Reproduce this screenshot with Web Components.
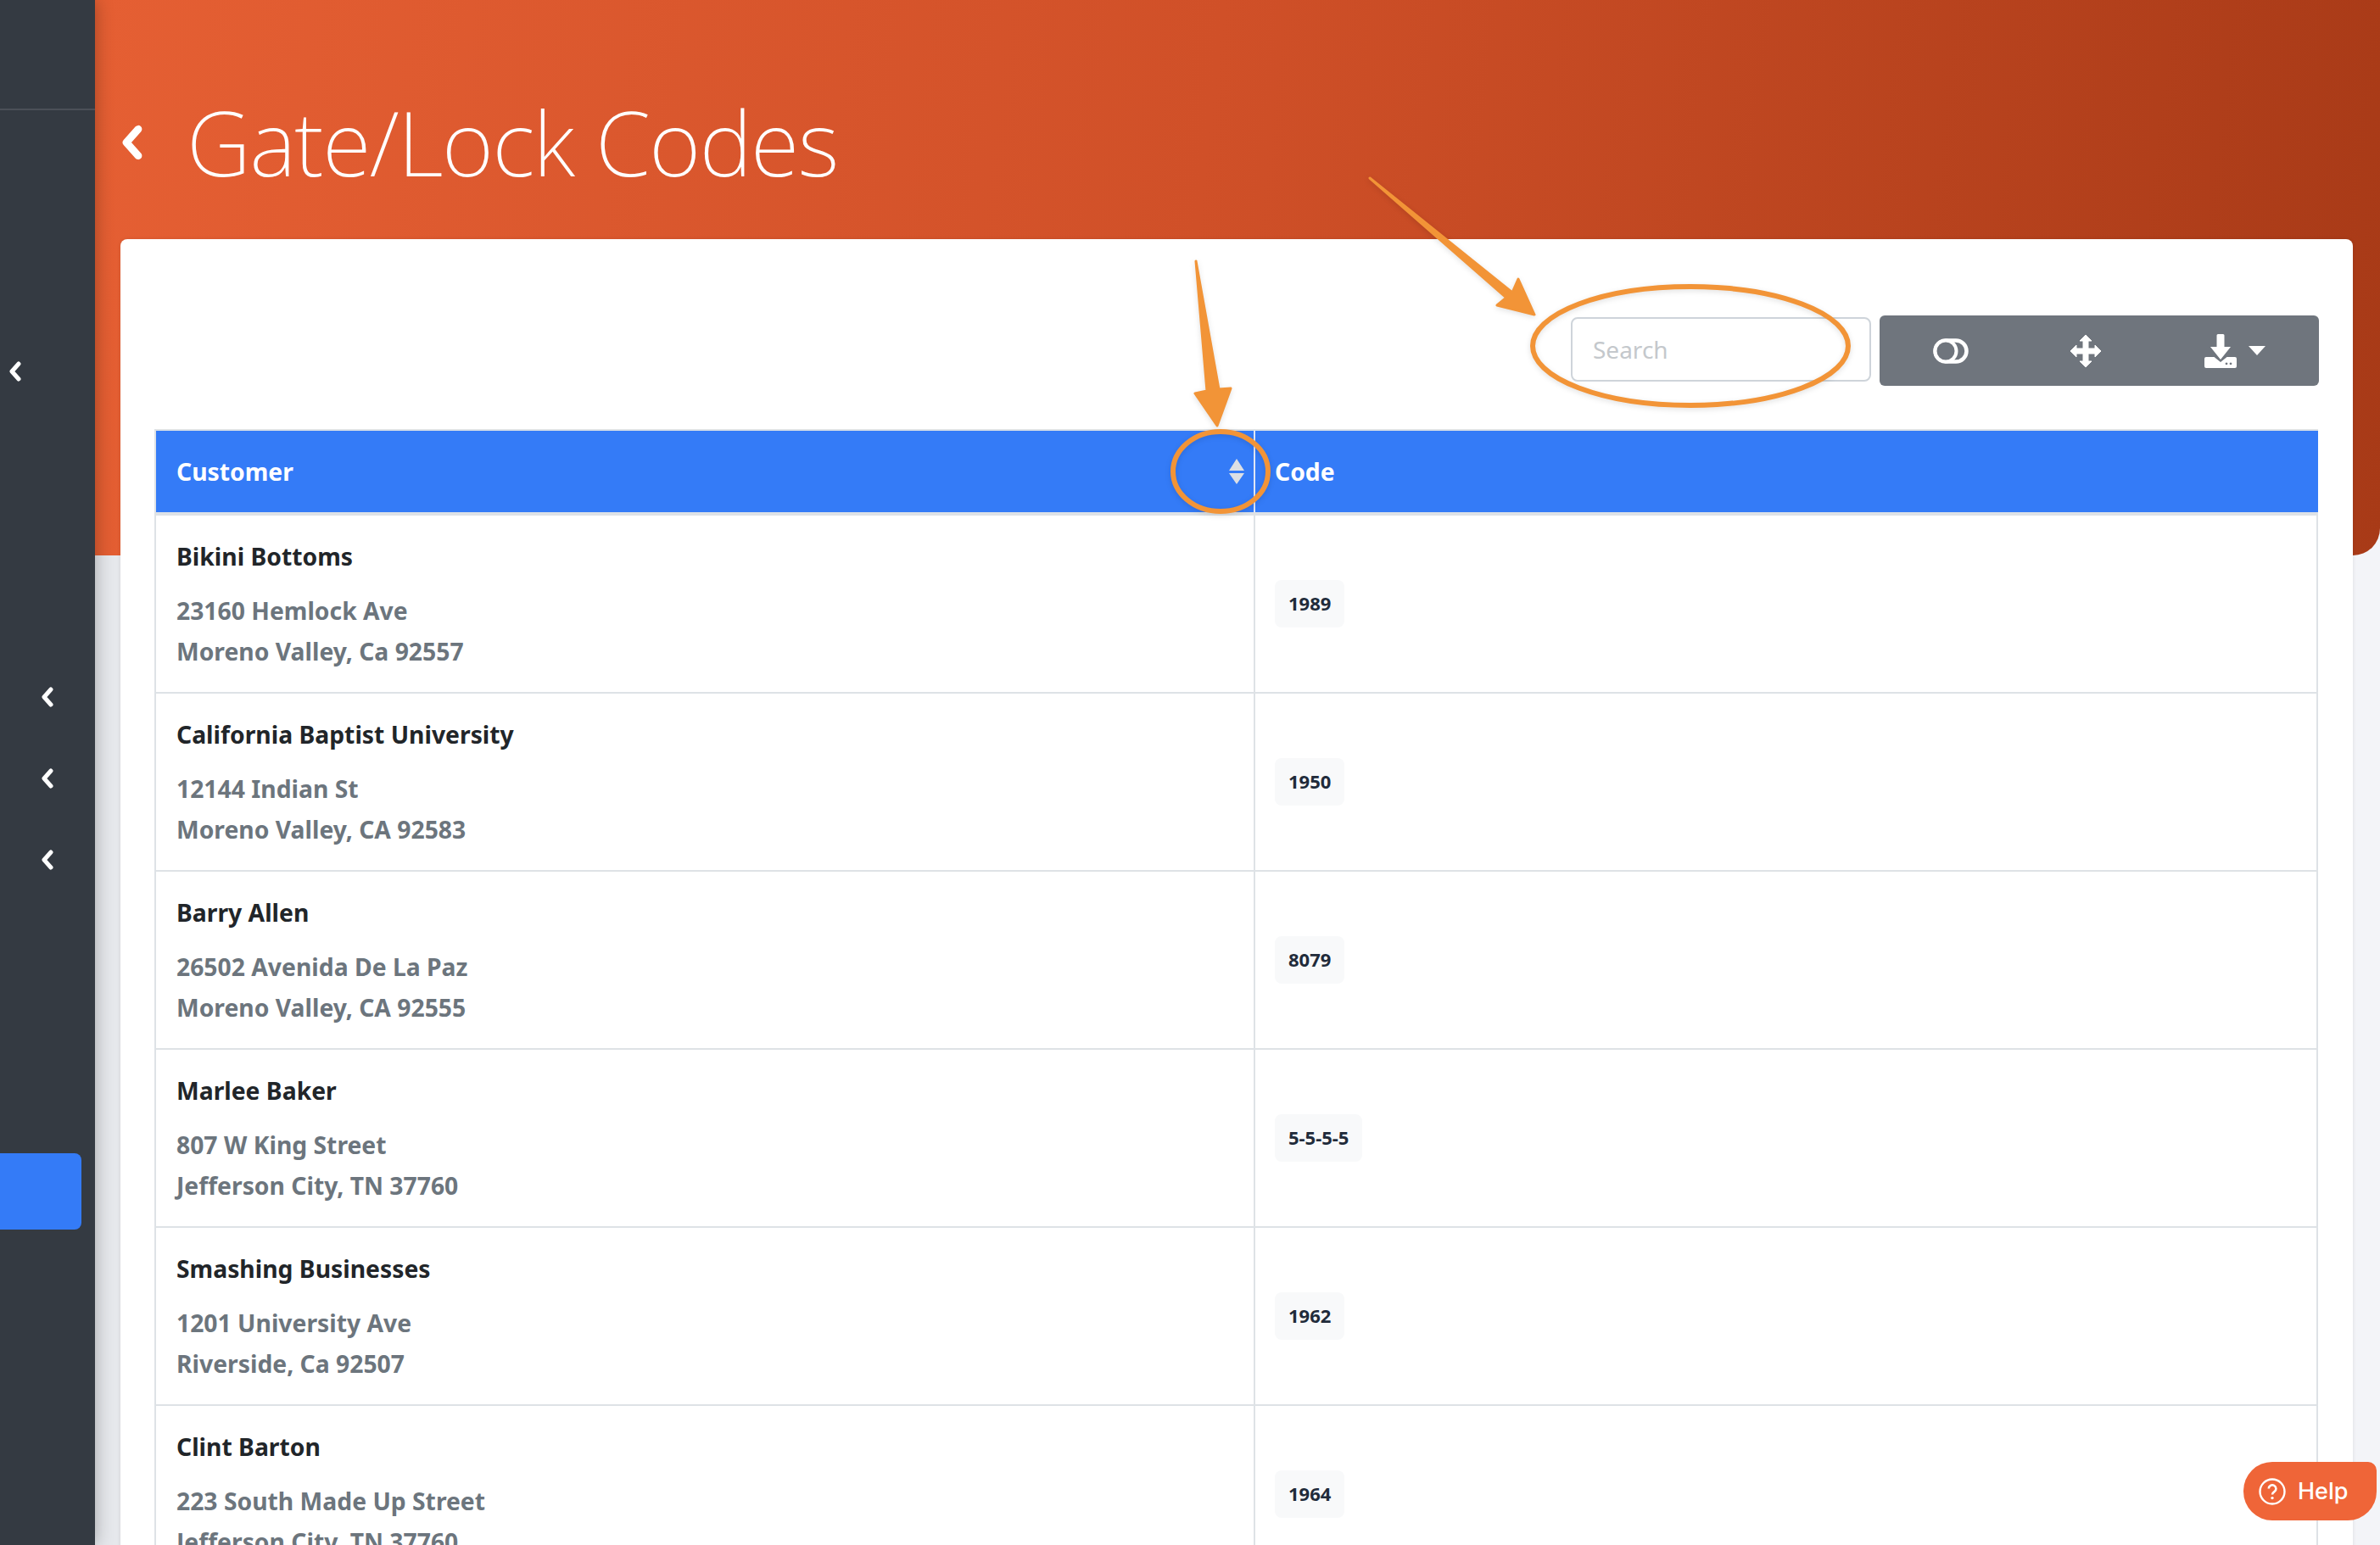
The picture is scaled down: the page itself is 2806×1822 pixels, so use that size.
<!DOCTYPE html>
<html>
<head>
<meta charset="utf-8">
<title>Gate/Lock Codes</title>
<style>
  html, body { margin: 0; padding: 0; height: 100%; overflow: hidden; background: #f3f4f8; font-family: "Noto Sans", sans-serif; }
</style>
</head>
<body>
<gate-codes-page></gate-codes-page>

<script>
const CHEVRON = `<svg viewBox="0 0 16 24" width="100%" height="100%"><path d="M12 3 L4 12 L12 21" fill="none" stroke="#fff" stroke-width="5" stroke-linecap="round" stroke-linejoin="round"/></svg>`;

class AppSidebar extends HTMLElement {
  connectedCallback() {
    this.attachShadow({ mode: 'open' });
    this.shadowRoot.innerHTML = `
      <style>
        :host {
          display: flex;
          flex-direction: column;
          width: 112px;
          height: 1822px;
          background: #343a42;
          box-shadow: 0 0 20px rgba(0, 0, 0, .3);
          position: relative;
          z-index: 2;
        }
        .brand { height: 128px; border-bottom: 2px solid #4b5058; }
        .chev { display: block; width: 16px; height: 24px; }
        .first { margin: 296px 0 0 10px; }
        .nav { margin: 360px 0 0 48px; display: flex; flex-direction: column; gap: 72px; }
        .active { margin-top: 334px; width: 96px; height: 90px; background: #347bf7; border-radius: 0 8px 8px 0; }
      </style>
      <div class="brand"></div>
      <span class="chev first">${CHEVRON}</span>
      <div class="nav">
        <span class="chev">${CHEVRON}</span>
        <span class="chev">${CHEVRON}</span>
        <span class="chev">${CHEVRON}</span>
      </div>
      <div class="active"></div>
    `;
  }
}

class PageHeader extends HTMLElement {
  connectedCallback() {
    this.attachShadow({ mode: 'open' });
    this.shadowRoot.innerHTML = `
      <style>
        :host {
          display: block;
          height: 655px;
          background: linear-gradient(97deg, #e55f33 0%, #d05028 48%, #a83a17 100%);
          border-radius: 0 0 32px 0;
        }
        .row { display: flex; align-items: center; padding: 98px 0 0 30px; height: 140px; }
        .back { width: 28px; height: 42px; margin-right: 50px; }
        h1 {
          margin: 0;
          color: #fff;
          font: 200 105px/140px "Noto Sans", sans-serif;
          letter-spacing: -1.6px;
          white-space: nowrap;
        }
      </style>
      <div class="row">
        <span class="back">${CHEVRON}</span>
        <h1><slot></slot></h1>
      </div>
    `;
  }
}

class TableToolbar extends HTMLElement {
  connectedCallback() {
    this.attachShadow({ mode: 'open' });
    this.shadowRoot.innerHTML = `
      <style>
        :host { display: flex; justify-content: flex-end; align-items: flex-start; gap: 10px; height: 83px; margin-right: -1px; }
        input {
          box-sizing: border-box;
          width: 354px;
          height: 76px;
          margin-top: 2px;
          padding: 0 24px;
          border: 2px solid #ced4da;
          border-radius: 8px;
          background: #fff;
          font: 400 28px "Noto Sans", sans-serif;
          outline: none;
        }
        input::placeholder { color: #c4c8cc; }
        .group {
          display: grid;
          grid-template-columns: 167px 152px 199px;
          width: 518px;
          height: 83px;
          background: #6f757d;
          border-radius: 6px;
        }
        .btn { display: flex; align-items: center; justify-content: center; gap: 14px; }
        svg { display: block; }
      </style>
      <input type="text" placeholder="Search">
      <div class="group">
        <span class="btn">
          <svg width="42" height="30" viewBox="0 0 42 30">
            <rect x="2.5" y="2.5" width="37" height="25" rx="12.5" fill="none" stroke="#fff" stroke-width="4.5"/>
            <circle cx="15" cy="15" r="12.5" fill="#6f757d" stroke="#fff" stroke-width="4"/>
          </svg>
        </span>
        <span class="btn">
          <svg width="38" height="40" viewBox="0 0 38 40">
            <path fill="#fff" stroke="#fff" stroke-width="1" stroke-linejoin="round" d="M19 1 L26 8 H22 V17 H30 V13 L37 20 L30 27 V23 H22 V32 H26 L19 39 L12 32 H16 V23 H8 V27 L1 20 L8 13 V17 H16 V8 H12 Z"/>
          </svg>
        </span>
        <span class="btn">
          <svg width="38" height="40" viewBox="0 0 38 40">
            <path fill="#fff" d="M14.5 1.5 a1.5 1.5 0 0 1 1.5 -1.5 h6 a1.5 1.5 0 0 1 1.5 1.5 V15 H31 L19 30 L7 15 H14.5 Z"/>
            <path fill="#fff" fill-rule="evenodd" d="M2 27 H11.5 L19 33 L26.5 27 H36 a2 2 0 0 1 2 2 V38 a2 2 0 0 1 -2 2 H2 a2 2 0 0 1 -2 -2 V29 a2 2 0 0 1 2 -2 Z M26 33.5 a1.4 1.4 0 1 0 0.01 0 Z M31 33.5 a1.4 1.4 0 1 0 0.01 0 Z"/>
          </svg>
          <svg width="20" height="11" viewBox="0 0 20 11"><path fill="#fff" d="M0 0 H20 L10 11 Z"/></svg>
        </span>
      </div>
    `;
  }
}

class TableHead extends HTMLElement {
  connectedCallback() {
    this.attachShadow({ mode: 'open' });
    this.shadowRoot.innerHTML = `
      <style>
        :host {
          display: grid;
          grid-template-columns: 1296px 1fr;
          height: 96px;
          background: #347bf7;
          border-top: 2px solid #dee2e6;
          border-bottom: 4px solid #dee2e6;
          border-left: 2px solid #dee2e6;
          color: #fff;
          font: 700 28.3px/96px "Noto Sans", sans-serif;
        }
        .cell { padding-left: 24px; position: relative; }
        .first { border-right: 2px solid #dfe6f5; }
        .second { padding-left: 23px; }
        svg { position: absolute; right: 11px; top: 33px; }
      </style>
      <div class="cell first">Customer
        <svg width="18" height="30" viewBox="0 0 18 30"><path fill="#dcdfe4" d="M9 0 L18 14 H0 Z M0 17 H18 L9 30 Z"/></svg>
      </div>
      <div class="cell second">Code</div>
    `;
  }
}

class CodeRow extends HTMLElement {
  connectedCallback() {
    const name = this.getAttribute('name');
    const street = this.getAttribute('street');
    const city = this.getAttribute('city');
    const code = this.getAttribute('code');
    this.attachShadow({ mode: 'open' });
    this.shadowRoot.innerHTML = `
      <style>
        :host {
          display: grid;
          grid-template-columns: 1296px 1fr;
          box-sizing: border-box;
          height: 210px;
          background: #fff;
          border-bottom: 2px solid #dee2e6;
          border-left: 2px solid #dee2e6;
          font-family: "Noto Sans", sans-serif;
        }
        .customer { padding: 28px 0 0 24px; border-right: 2px solid #dee2e6; }
        .name { color: #212529; font: 700 28.3px/40px "Noto Sans", sans-serif; margin-bottom: 20px; }
        .addr { color: #6c757d; font: 700 28.3px/48px "Noto Sans", sans-serif; }
        .code { display: flex; align-items: center; padding-left: 23px; }
        .badge {
          display: inline-block;
          padding: 0 16px 2px;
          background: #f8f9fa;
          border-radius: 8px;
          color: #212b3a;
          font: 700 22px/54px "Noto Sans", sans-serif;
        }
      </style>
      <div class="customer">
        <div class="name">${name}</div>
        <div class="addr">${street}</div>
        <div class="addr">${city}</div>
      </div>
      <div class="code"><span class="badge">${code}</span></div>
    `;
  }
}

class HelpButton extends HTMLElement {
  connectedCallback() {
    this.attachShadow({ mode: 'open' });
    this.shadowRoot.innerHTML = `
      <style>
        :host {
          position: fixed;
          left: 2645px;
          top: 1724px;
          width: 157px;
          height: 69px;
          display: flex;
          align-items: center;
          gap: 14px;
          box-sizing: border-box;
          padding-left: 18px;
          background: #ef6538;
          border-radius: 34px 10px 34px 34px;
          color: #fff;
          font: 500 27px "Inter", sans-serif;
          z-index: 5;
        }
        svg { display: block; }
      </style>
      <svg width="32" height="32" viewBox="0 0 32 32">
        <circle cx="16" cy="16" r="14.5" fill="none" stroke="#fff" stroke-width="2.4"/>
        <path d="M11.8 12.6 a4.3 4.3 0 1 1 6.6 3.6 c-1.5 1 -2.4 1.8 -2.4 3.4" fill="none" stroke="#fff" stroke-width="2.6"/>
        <circle cx="16" cy="23.6" r="1.7" fill="#fff"/>
      </svg>
      <span>Help</span>
    `;
  }
}

// the orange marks drawn over the screenshot
class AnnotationLayer extends HTMLElement {
  connectedCallback() {
    this.attachShadow({ mode: 'open' });
    this.shadowRoot.innerHTML = `
      <style>
        :host { position: fixed; left: 0; top: 0; width: 2806px; height: 1822px; pointer-events: none; z-index: 4; }
        svg { display: block; filter: drop-shadow(0 2px 3px rgba(0,0,0,.12)); }
      </style>
      <svg width="2806" height="1822" viewBox="0 0 2806 1822" fill="none">
        <ellipse cx="1993" cy="408" rx="186" ry="70" stroke="#f29437" stroke-width="6"/>
        <ellipse cx="1439" cy="556" rx="56" ry="47" stroke="#f29437" stroke-width="6"/>
        <path fill="#f29437" stroke="#f29437" stroke-width="3" stroke-linejoin="round"
          d="M1615 210 L1783 345 L1790 329 L1809 371 L1765 360 L1776 351 Z"/>
        <path fill="#f29437" stroke="#f29437" stroke-width="3" stroke-linejoin="round"
          d="M1410 308 L1437 459 L1451 458 L1435 502 L1409 464 L1423 461 Z"/>
      </svg>
    `;
  }
}

class GateCodesPage extends HTMLElement {
  connectedCallback() {
    const rows = [
      ['Bikini Bottoms', '23160 Hemlock Ave', 'Moreno Valley, Ca 92557', '1989'],
      ['California Baptist University', '12144 Indian St', 'Moreno Valley, CA 92583', '1950'],
      ['Barry Allen', '26502 Avenida De La Paz', 'Moreno Valley, CA 92555', '8079'],
      ['Marlee Baker', '807 W King Street', 'Jefferson City, TN 37760', '5-5-5-5'],
      ['Smashing Businesses', '1201 University Ave', 'Riverside, Ca 92507', '1962'],
      ['Clint Barton', '223 South Made Up Street', 'Jefferson City, TN 37760', '1964']
    ];
    this.attachShadow({ mode: 'open' });
    this.shadowRoot.innerHTML = `
      <style>
        :host { display: grid; grid-template-columns: 112px 1fr; width: 2806px; height: 1822px; overflow: hidden; }
        main { min-width: 0; background: linear-gradient(90deg, #e6e8ec 0, #e6e8ec 30px, #f3f4f8 60px); }
        .card {
          margin: -373px 32px 0 30px;
          padding: 90px 41px 0 40px;
          height: 1600px;
          background: #fff;
          border-radius: 8px 8px 0 0;
          box-shadow: 0 0 4px rgba(0, 0, 0, .1);
        }
        table-head { margin-top: 51px; }
        .rows { border-right: 2px solid #dee2e6; }
      </style>
      <app-sidebar></app-sidebar>
      <main>
        <page-header>Gate/Lock Codes</page-header>
        <section class="card">
          <table-toolbar></table-toolbar>
          <table-head></table-head>
          <div class="rows">
            ${rows.map(r => `<code-row name="${r[0]}" street="${r[1]}" city="${r[2]}" code="${r[3]}"></code-row>`).join('')}
          </div>
        </section>
      </main>
      <help-button></help-button>
      <annotation-layer></annotation-layer>
    `;
  }
}

customElements.define('app-sidebar', AppSidebar);
customElements.define('page-header', PageHeader);
customElements.define('table-toolbar', TableToolbar);
customElements.define('table-head', TableHead);
customElements.define('code-row', CodeRow);
customElements.define('help-button', HelpButton);
customElements.define('annotation-layer', AnnotationLayer);
customElements.define('gate-codes-page', GateCodesPage);
</script>
</body>
</html>
